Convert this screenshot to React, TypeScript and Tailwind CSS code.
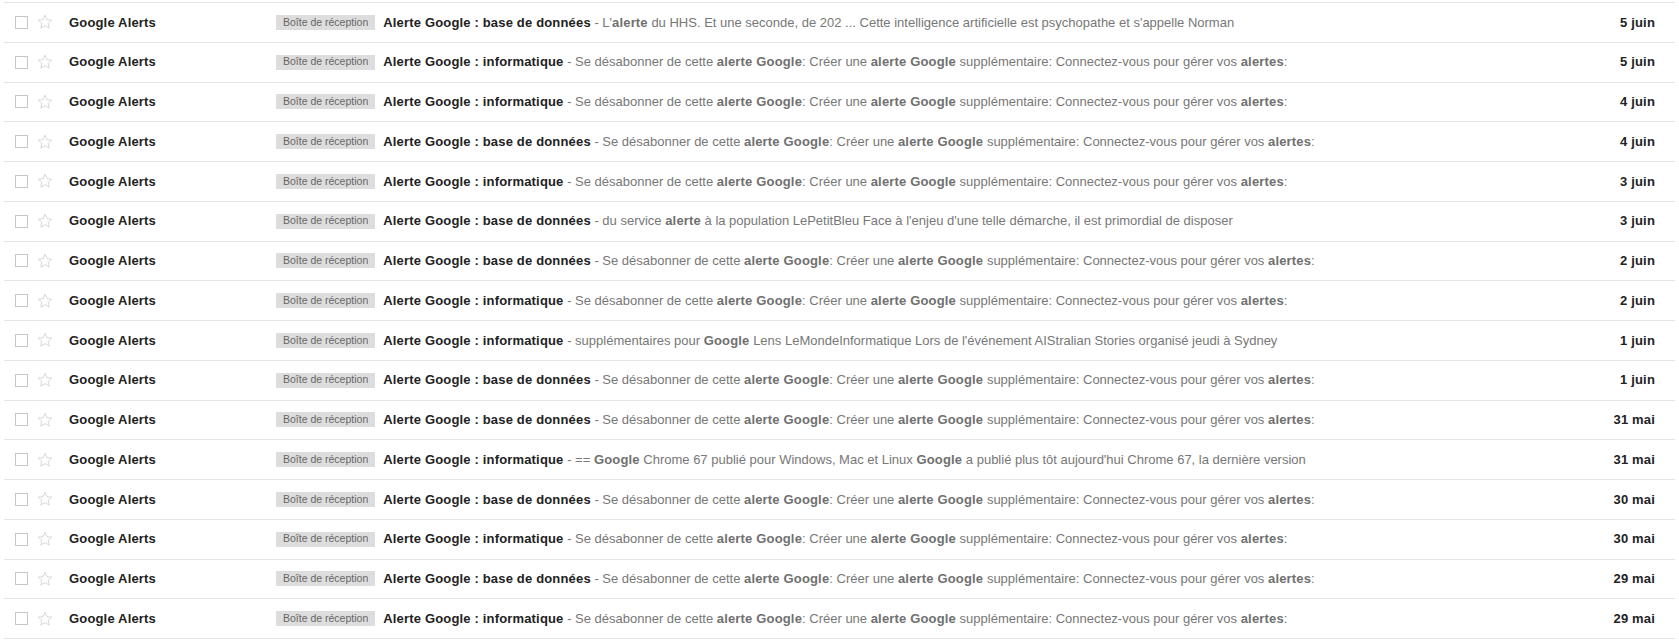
import React from 'react';

type Mail = {
  topic: string;
  snippet?: React.ReactNode;
  date: string;
};

const B = ({ children }: { children: React.ReactNode }) => (
  <b className="font-bold tracking-[0.17px] text-[#707070]">{children}</b>
);

const standard = (
  <>
    Se désabonner de cette <B>alerte Google</B>: Créer une <B>alerte Google</B> supplémentaire: Connectez-vous pour
    gérer vos <B>alertes</B>:
  </>
);

const BDD = 'base de données';
const INFO = 'informatique';

const mails: Mail[] = [
  {
    topic: BDD,
    snippet: (
      <>
        L'<B>alerte</B> du HHS. Et une seconde, de 202 ... Cette intelligence artificielle est psychopathe et s'appelle
        Norman
      </>
    ),
    date: '5 juin',
  },
  { topic: INFO, date: '5 juin' },
  { topic: INFO, date: '4 juin' },
  { topic: BDD, date: '4 juin' },
  { topic: INFO, date: '3 juin' },
  {
    topic: BDD,
    snippet: (
      <>
        du service <B>alerte</B> à la population LePetitBleu Face à l'enjeu d'une telle démarche, il est primordial de
        disposer
      </>
    ),
    date: '3 juin',
  },
  { topic: BDD, date: '2 juin' },
  { topic: INFO, date: '2 juin' },
  {
    topic: INFO,
    snippet: (
      <>
        supplémentaires pour <B>Google</B> Lens LeMondeInformatique Lors de l'événement AIStralian Stories organisé
        jeudi à Sydney
      </>
    ),
    date: '1 juin',
  },
  { topic: BDD, date: '1 juin' },
  { topic: BDD, date: '31 mai' },
  {
    topic: INFO,
    snippet: (
      <>
        == <B>Google</B> Chrome 67 publié pour Windows, Mac et Linux <B>Google</B> a publié plus tôt aujourd'hui Chrome
        67, la dernière version
      </>
    ),
    date: '31 mai',
  },
  { topic: BDD, date: '30 mai' },
  { topic: INFO, date: '30 mai' },
  { topic: BDD, date: '29 mai' },
  { topic: INFO, date: '29 mai' },
];

function Star() {
  return (
    <svg width="16" height="16" viewBox="0 0 16 16" className="shrink-0">
      <path
        d="M8 1.2l1.95 4.5 4.85.42-3.68 3.2 1.1 4.78L8 11.6l-4.22 2.5 1.1-4.78-3.68-3.2 4.85-.42z"
        fill="none"
        stroke="#d4d4d4"
        strokeWidth="0.9"
        strokeLinejoin="round"
      />
    </svg>
  );
}

function Row({ mail }: { mail: Mail }) {
  return (
    <li className="flex h-[39.75px] items-center border-b border-[#e5e5e5] pl-[11px] pr-5 text-[13px] whitespace-nowrap">
      <span className="h-[13px] w-[13px] shrink-0 border border-[#c6c6c6] bg-white" />
      <span className="ml-[9px]">
        <Star />
      </span>
      <span className="ml-4 w-[207px] shrink-0 font-bold tracking-[0.17px] text-[#222]">Google Alerts</span>
      <span className="flex h-[15px] shrink-0 items-center bg-[#dddddd] px-[7px] text-[10.5px] text-[#666]">
        Boîte de réception
      </span>
      <div className="ml-2 min-w-0 flex-1 truncate">
        <span className="font-bold tracking-[0.17px] text-[#222]">Alerte Google : {mail.topic}</span>
        <span className="text-[#777]"> - {mail.snippet ?? standard}</span>
      </div>
      <span className="ml-4 shrink-0 font-bold tracking-[0.17px] text-[#222]">{mail.date}</span>
    </li>
  );
}

export default function App() {
  return (
    <div className="min-h-screen bg-white pt-[2px] font-['Liberation_Sans',Arial,sans-serif]">
      <ul className="mx-1 border-t border-[#e5e5e5]">
        {mails.map((m, i) => (
          <Row key={i} mail={m} />
        ))}
      </ul>
    </div>
  );
}
